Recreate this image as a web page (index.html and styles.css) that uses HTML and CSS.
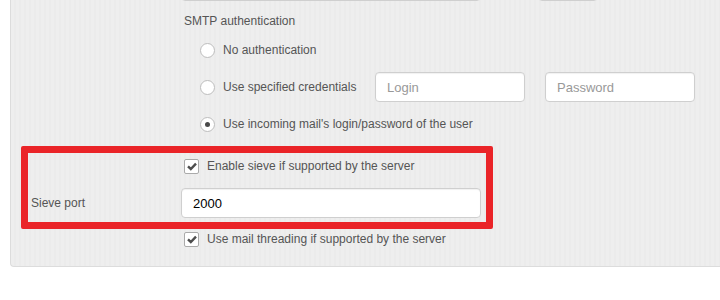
FILE: index.html
```html
<!DOCTYPE html>
<html lang="en">
<head>
    <meta charset="UTF-8">
    <title>Mail settings</title>
    <link rel="stylesheet" href="styles.css">
</head>
<body>
    <div class="panel">
        <div class="row">
            <span class="row-label"></span>
            <div class="control inline">
                <input type="text" class="field wide">
                <input type="text" class="field port">
            </div>
        </div>

        <div class="row section-title">
            <span class="row-label"></span>
            <div class="control text">SMTP authentication</div>
        </div>

        <div class="radio-list">
            <div class="radio-row">
                <span class="radio"></span>
                <span class="radio-text">No authentication</span>
            </div>
            <div class="radio-row">
                <span class="radio"></span>
                <span class="radio-text cred">Use specified credentials</span>
                <input type="text" class="field small" placeholder="Login">
                <input type="text" class="field small" placeholder="Password">
            </div>
            <div class="radio-row">
                <span class="radio checked"></span>
                <span class="radio-text">Use incoming mail's login/password of the user</span>
            </div>
        </div>

        <div class="sieve">
            <div class="highlight"></div>
            <div class="row check-row">
                <span class="row-label"></span>
                <div class="control check">
                    <span class="checkbox">
                        <svg width="10" height="9" viewBox="0 0 10 9"><path d="M1 4.4 L3.8 7 L9 1.6" fill="none" stroke="#4d4d4d" stroke-width="2.4"/></svg>
                    </span>
                    <span>Enable sieve if supported by the server</span>
                </div>
            </div>
            <div class="row input-row">
                <span class="row-label">Sieve port</span>
                <div class="control">
                    <input type="text" class="field wide" value="2000">
                </div>
            </div>
        </div>

        <div class="row check-row">
            <span class="row-label"></span>
            <div class="control check">
                <span class="checkbox">
                    <svg width="10" height="9" viewBox="0 0 10 9"><path d="M1 4.4 L3.8 7 L9 1.6" fill="none" stroke="#4d4d4d" stroke-width="2.4"/></svg>
                </span>
                <span>Use mail threading if supported by the server</span>
            </div>
        </div>
    </div>
</body>
</html>
```

FILE: styles.css
```css
body {
    margin: 0;
    overflow: hidden;
    background: #fff;
    font-family: "Liberation Sans", Arial, sans-serif;
    font-size: 12px;
    color: #555;
}
.panel {
    width: 709px;
    margin: -40px 0 0 10px;
    padding: 9px 0 12px 0;
    border: 1px solid #dcdcdc;
    border-right: none;
    border-radius: 4px 0 0 4px;
    background: repeating-linear-gradient(90deg, #eeeeee 0 3px, #ebebeb 3px 5px);
}
.row {
    display: flex;
    align-items: center;
}
.row-label {
    width: 150px;
    padding-left: 20px;
    flex-shrink: 0;
}
.control.inline {
    display: flex;
    gap: 57px;
}
.field {
    box-sizing: border-box;
    height: 31px;
    padding: 0 11px;
    border: 1px solid #cfcfcf;
    border-radius: 4px;
    background: #fff;
    font-family: "Liberation Sans", Arial, sans-serif;
    font-size: 13px;
    color: #000;
    box-shadow: inset 0 1px 1px rgba(0, 0, 0, 0.06);
}
.field::placeholder {
    color: #999;
}
.field.wide {
    width: 300px;
}
.field.port {
    width: 60px;
}
.field.small {
    width: 150px;
    height: 30px;
    margin-right: 20px;
}
.section-title {
    margin-top: 10px;
    height: 20px;
}
.control.text {
    padding-left: 3px;
}
.radio-list {
    display: flex;
    flex-direction: column;
    gap: 7px;
    margin-top: 4px;
    padding-left: 189px;
}
.radio-row {
    display: flex;
    align-items: center;
    height: 30px;
}
.radio {
    box-sizing: border-box;
    width: 15px;
    height: 15px;
    border: 1px solid #bdbdbd;
    border-radius: 50%;
    background: #fff;
    margin-right: 8px;
    position: relative;
}
.radio.checked::after {
    content: "";
    position: absolute;
    left: 4px;
    top: 4px;
    width: 5px;
    height: 5px;
    border-radius: 50%;
    background: #4a4a4a;
}
.radio-text.cred {
    width: 152px;
}
.sieve {
    position: relative;
    margin-top: 12px;
}
.highlight {
    position: absolute;
    left: 10px;
    top: -5px;
    width: 472px;
    height: 83px;
    box-sizing: border-box;
    border: 7px solid #ea2428;
    border-radius: 2px;
    pointer-events: none;
}
.check-row {
    height: 30px;
}
.control.check {
    display: flex;
    align-items: center;
    padding-left: 3px;
}
.checkbox {
    box-sizing: border-box;
    width: 15px;
    height: 15px;
    border: 1px solid #aaa;
    border-radius: 2px;
    background: #fff;
    margin-right: 8px;
    display: flex;
    align-items: center;
    justify-content: center;
}
.input-row {
    margin-top: 7px;
    margin-bottom: 6px;
}
.input-row .field {
    height: 30px;
}
```
